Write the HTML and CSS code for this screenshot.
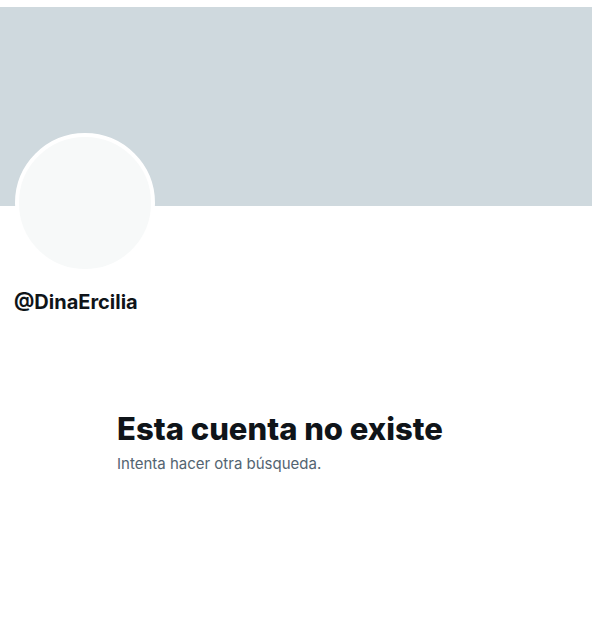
FILE: index.html
```html
<!DOCTYPE html>
<html lang="es">
<head>
<meta charset="utf-8">
<link rel="stylesheet" href="styles.css">
</head>
<body>
<div class="page">
  <div class="banner"></div>
  <div class="profile">
    <div class="avatar"></div>
    <div class="handle">@DinaErcilia</div>
  </div>
  <div class="empty">
    <h1 class="empty-title">Esta cuenta no existe</h1>
    <p class="empty-sub">Intenta hacer otra búsqueda.</p>
  </div>
</div>
</body>
</html>
```
FILE: styles.css
```css
html, body { margin: 0; padding: 0; background: #fff; }
body { font-family: "Inter", "Noto Sans", sans-serif; color: #0f1419; }
.page { padding-top: 7px; width: 592px; }
.banner { height: 199px; background: #cfd9de; }
.profile { padding: 0 14px; }
.avatar {
  width: 132px; height: 132px; border-radius: 50%;
  background: #f7f9f9; border: 4px solid #fff;
  margin-top: -73px; margin-left: 1px;
}
.handle { font-weight: 700; font-size: 20px; line-height: 24px; margin-top: 17px; }
.empty { padding-left: 117px; margin-top: 97px; }
.empty-title { margin: 0; font-size: 31px; line-height: 36px; font-weight: 800; }
.empty-sub { margin: 7px 0 0; font-size: 15px; line-height: 20px; color: #536471; }
```
